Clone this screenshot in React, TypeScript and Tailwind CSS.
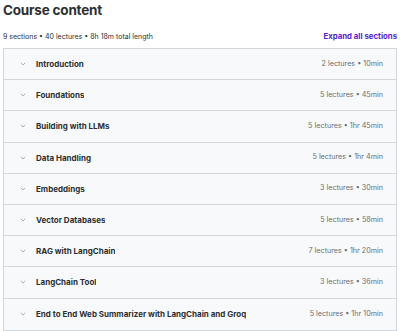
import { ChevronDown } from "lucide-react";

const sections = [
  { title: "Introduction", meta: "2 lectures • 10min" },
  { title: "Foundations", meta: "5 lectures • 45min" },
  { title: "Building with LLMs", meta: "5 lectures • 1hr 45min" },
  { title: "Data Handling", meta: "5 lectures • 1hr 4min" },
  { title: "Embeddings", meta: "3 lectures • 30min" },
  { title: "Vector Databases", meta: "5 lectures • 58min" },
  { title: "RAG with LangChain", meta: "7 lectures • 1hr 20min" },
  { title: "LangChain Tool", meta: "3 lectures • 36min" },
  { title: "End to End Web Summarizer with LangChain and Groq", meta: "5 lectures • 1hr 10min" },
];

export default function App() {
  return (
    <div className="w-[400px] h-[331px] bg-white overflow-hidden font-['Inter',sans-serif] text-[#2d2f31]">
      <h2 className="px-[3px] pt-[1px] text-[13.5px] leading-[18px] font-bold tracking-[-0.2px]">Course content</h2>
      <div className="flex items-center justify-between px-[3px] mt-[13px] h-[10px]">
        <span className="text-[7px] text-[#2d2f31]">9 sections • 40 lectures • 8h 18m total length</span>
        <span className="text-[7.8px] font-bold text-[#5624d0]">Expand all sections</span>
      </div>
      <div className="mx-[3px] mt-[6px] border border-[#d1d7dc]">
        {sections.map((s, i) => (
          <div
            key={i}
            className="flex items-center h-[31.2px] bg-[#f7f9fa] border-b border-[#d1d7dc] last:border-b-0 pl-[15px] pr-[13px]"
          >
            <ChevronDown size={8} strokeWidth={1.6} className="text-[#6a6f73] shrink-0" />
            <span className="ml-[9px] text-[8px] font-bold truncate">{s.title}</span>
            <span className="ml-auto text-[7.2px] text-[#6a6f73] whitespace-nowrap">{s.meta}</span>
          </div>
        ))}
      </div>
    </div>
  );
}
